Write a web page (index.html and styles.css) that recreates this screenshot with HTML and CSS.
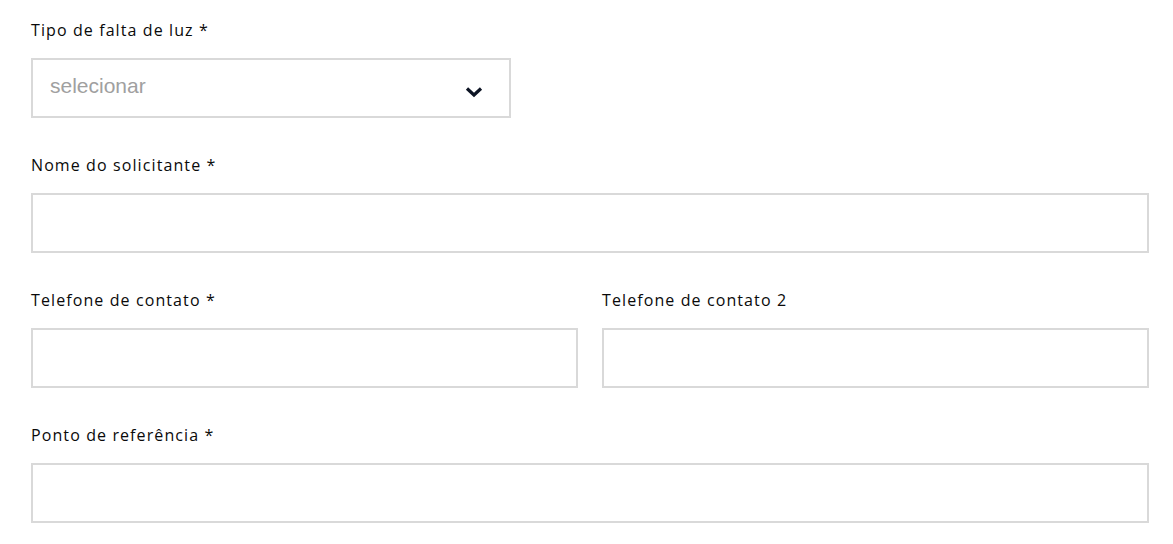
FILE: index.html
```html
<!DOCTYPE html>
<html lang="pt">
<head>
<meta charset="utf-8">
<link rel="stylesheet" href="styles.css">
</head>
<body>
<form class="form">
  <div class="field field-select">
    <label class="label">Tipo de falta de luz *</label>
    <div class="select">
      <span class="placeholder">selecionar</span>
      <svg class="chevron" width="18" height="12" viewBox="0 0 18 12"><path d="M2 2.5 L9 9 L16 2.5" fill="none" stroke="#0d1424" stroke-width="3.2"/></svg>
    </div>
  </div>
  <div class="field">
    <label class="label">Nome do solicitante *</label>
    <div class="input"></div>
  </div>
  <div class="row">
    <div class="field">
      <label class="label">Telefone de contato *</label>
      <div class="input"></div>
    </div>
    <div class="field">
      <label class="label">Telefone de contato 2</label>
      <div class="input"></div>
    </div>
  </div>
  <div class="field">
    <label class="label">Ponto de referência *</label>
    <div class="input"></div>
  </div>
</form>
</body>
</html>
```
FILE: styles.css
```css
html, body {
  margin: 0;
  padding: 0;
  background: #ffffff;
}
body {
  font-family: "Open Sans", "Liberation Sans", sans-serif;
  color: #111111;
}
.form {
  display: flex;
  flex-direction: column;
  gap: 35px;
  padding: 18px 24px 0 31px;
}
.field {
  display: flex;
  flex-direction: column;
  gap: 16px;
}
.field-select {
  width: 480px;
}
.label {
  font-size: 16px;
  line-height: 24px;
  letter-spacing: 1.1px;
  color: #0a0a0a;
}
.input, .select {
  box-sizing: border-box;
  height: 60px;
  border: 2px solid #d9d9d9;
  background: #fff;
}
.select {
  display: flex;
  align-items: center;
  justify-content: space-between;
  padding: 0 26px 0 17px;
}
.placeholder {
  font-family: "Liberation Sans", Arial, sans-serif;
  font-size: 21px;
  color: #a0a0a0;
  position: relative;
  top: -2px;
}
.chevron {
  display: block;
  margin-top: 8px;
}
.row {
  display: grid;
  grid-template-columns: 1fr 1fr;
  gap: 24px;
}
```
